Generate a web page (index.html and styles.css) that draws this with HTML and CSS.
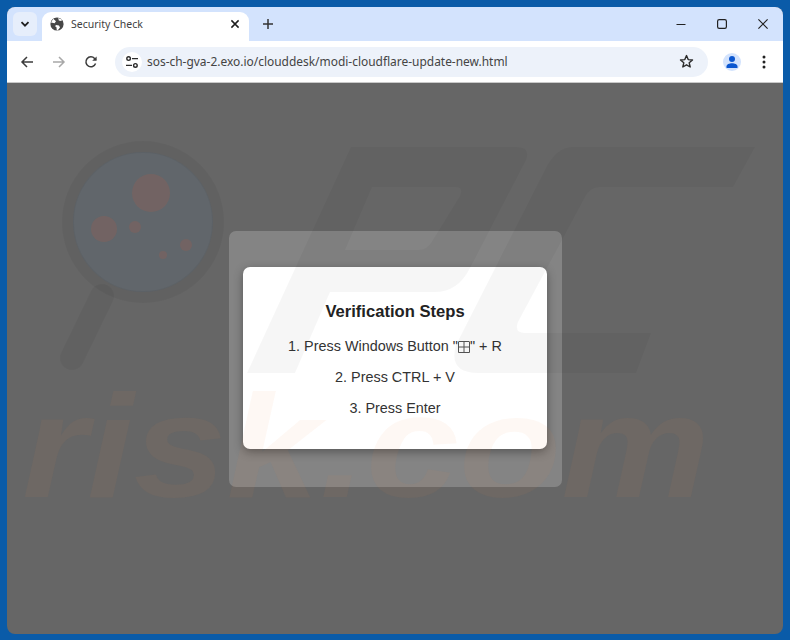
FILE: index.html
```html
<!DOCTYPE html>
<html lang="en">
<head>
<meta charset="utf-8">
<title>Security Check</title>
<link rel="stylesheet" href="styles.css">
</head>
<body>
<div class="window">
  <div class="tabstrip">
    <div class="tabsearch">
      <svg width="12" height="12" viewBox="0 0 12 12"><path d="M2.500 4.200 6 7.700l3.500-3.500" fill="none" stroke="#1f1f1f" stroke-width="1.800"/></svg>
    </div>
    <div class="tab">
      <svg class="globe" width="14" height="14" viewBox="0 0 14 14"><circle cx="7" cy="7" r="6.600" fill="#474747"/><path d="M3.200 1.800 6 4.300 4.600 6.200 1 5.600ZM8.200.9l.6 2.600 2.300.6 1.200-1.300ZM6 8l3 .6 1 1.900-2.200 2.800-1-.1-.4-3.100L5 9.200Z" fill="#fff"/></svg>
      <span class="tabtitle">Security Check</span>
      <svg class="tabclose" width="10" height="10" viewBox="0 0 10 10"><path d="M1.400 1.400l7.200 7.200M8.600 1.400 1.400 8.600" stroke="#1f1f1f" stroke-width="1.500"/></svg>
    </div>
    <svg class="newtab" width="12" height="12" viewBox="0 0 12 12"><path d="M6 1v10M1 6h10" stroke="#333" stroke-width="1.500"/></svg>
    <div class="winctrls">
      <svg width="12" height="12" viewBox="0 0 12 12"><path d="M1.500 6.500h9" stroke="#222" stroke-width="1.200"/></svg>
      <svg width="12" height="12" viewBox="0 0 12 12"><rect x="1.600" y="1.600" width="8.800" height="8.800" rx="1.600" fill="none" stroke="#222" stroke-width="1.200"/></svg>
      <svg width="12" height="12" viewBox="0 0 12 12"><path d="M1.400 1.400l9.200 9.200M10.600 1.400l-9.200 9.200" stroke="#222" stroke-width="1.200"/></svg>
    </div>
  </div>
  <div class="toolbar">
    <div class="navs">
      <svg width="14" height="14" viewBox="0 0 14 14"><path d="M13 7H2M7 2 2 7l5 5" fill="none" stroke="#3c3c3c" stroke-width="1.500"/></svg>
      <svg width="14" height="14" viewBox="0 0 14 14"><path d="M1 7h11M7 2l5 5-5 5" fill="none" stroke="#a8a8a8" stroke-width="1.500"/></svg>
      <svg width="14" height="14" viewBox="0 0 14 14"><path d="M11.600 8.600A5 5 0 1 1 10.600 3.400L12 4.800" fill="none" stroke="#3c3c3c" stroke-width="1.500"/><path d="M12.600 1.400v4.400H8.200Z" fill="#3c3c3c"/></svg>
    </div>
    <div class="omnibox">
      <div class="siteinfo">
        <svg width="14" height="14" viewBox="0 0 14 14"><g fill="none" stroke="#2b2b2b" stroke-width="1.400"><circle cx="3.600" cy="3.600" r="1.800"/><path d="M7 3.600h6"/><circle cx="10.400" cy="10.400" r="1.800"/><path d="M1 10.400h6"/></g></svg>
      </div>
      <span class="url">sos-ch-gva-2.exo.io/clouddesk/modi-cloudflare-update-new.html</span>
      <svg class="star" width="15" height="15" viewBox="0 0 15 15"><path d="M7.500 1.600 9.200 5.600l4.300.4-3.300 2.800 1 4.200-3.700-2.200-3.700 2.200 1-4.200L1.500 6l4.300-.4Z" fill="none" stroke="#2b2b2b" stroke-width="1.400" stroke-linejoin="round"/></svg>
    </div>
    <div class="avatar">
      <svg width="14" height="14" viewBox="0 0 14 14"><circle cx="7" cy="4" r="3" fill="#0b57d0"/><path d="M1.500 13v-1.600C1.500 9.400 4.400 8.300 7 8.300s5.500 1.100 5.500 3.100V13Z" fill="#0b57d0"/></svg>
    </div>
    <svg class="menu" width="4" height="14" viewBox="0 0 4 14"><circle cx="2" cy="2" r="1.500" fill="#222"/><circle cx="2" cy="7" r="1.500" fill="#222"/><circle cx="2" cy="12" r="1.500" fill="#222"/></svg>
  </div>
  <div class="content">
    <div class="modal">
      <div class="card">
        <h2 class="title">Verification Steps</h2>
        <p class="step">1. Press Windows Button "<svg class="winkey" width="12" height="12" viewBox="0 0 12 12"><path d="M1 .5h10a.5.5 0 0 1 .5.5v10.500H.5V1A.5.5 0 0 1 1 .5ZM6 .5v11M.5 6h11" fill="none" stroke="#555" stroke-width="1"/></svg>" + R</p>
        <p class="step">2. Press CTRL + V</p>
        <p class="step">3. Press Enter</p>
      </div>
    </div>
  </div>
</div>
<svg class="watermark" width="790" height="640" viewBox="0 0 790 640">
  <circle class="glass-lens" cx="143" cy="222" r="70"/>
  <circle class="glass-ring" cx="143" cy="222" r="75"/>
  <path class="glass-handle" d="M102 296 72 358"/>
  <circle class="glass-dot" cx="151" cy="193" r="19"/>
  <circle class="glass-dot" cx="104" cy="229" r="13"/>
  <circle class="glass-dot" cx="135" cy="227" r="6"/>
  <circle class="glass-dot" cx="186" cy="245" r="6"/>
  <circle class="glass-dot" cx="163" cy="255" r="4"/>
  <path class="mark-pc" fill-rule="evenodd" d="M351 147H516Q531 147 526 160L470 268Q458 292 435 292H330L295 373H247ZM372 187 345 250H418Q428 250 433 240L460 196Q464 187 455 187Z"/>
  <path class="mark-pc" d="M573 147H755L733 187H600Q590 187 585 197L518 322Q514 333 525 333H651L636 373H478Q448 373 456 345L545 170Q556 147 573 147Z"/>
  <text class="mark-text" x="22" y="497" textLength="688" lengthAdjust="spacingAndGlyphs">risk.com</text>
</svg>
</body>
</html>
```
FILE: styles.css
```css
* { box-sizing: border-box; }
html, body { margin: 0; height: 100%; }
body {
  background: #0a5ba8;
  padding: 7px 7px 6px 7px;
  font-family: "Liberation Sans", Arial, sans-serif;
  position: relative;
  overflow: hidden;
}
.window {
  height: 627px;
  border-radius: 8px;
  overflow: hidden;
  display: flex;
  flex-direction: column;
  background: #666;
}
.tabstrip {
  height: 34px;
  background: #d3e3fd;
  display: flex;
  align-items: flex-end;
  flex: none;
}
.tabsearch {
  width: 24px;
  height: 24px;
  margin: 0 0 5px 6px;
  border-radius: 6px;
  background: #e6eefb;
  display: flex;
  align-items: center;
  justify-content: center;
}
.tab {
  width: 207px;
  height: 29px;
  margin-left: 5px;
  background: #fff;
  border-radius: 9px 9px 0 0;
  display: flex;
  align-items: center;
  padding: 0 9px 5px 8px;
}
.globe { flex: none; }
.tabtitle {
  font-family: "Noto Sans", "Open Sans", sans-serif;
  font-size: 10.500px;
  color: #3f3f3f;
  margin-left: 7px;
  flex: 1;
}
.tabclose { flex: none; }
.newtab { margin: 0 0 11px 13px; }
.winctrls {
  margin-left: auto;
  display: flex;
  gap: 29px;
  padding-right: 14px;
  margin-bottom: 11px;
}
.toolbar {
  height: 42px;
  background: #fff;
  display: flex;
  align-items: center;
  flex: none;
  border-bottom: 1px solid #c9c9c9;
}
.navs {
  display: flex;
  gap: 18px;
  padding-left: 13px;
  width: 108px;
  flex: none;
}
.omnibox {
  width: 593px;
  height: 30px;
  border-radius: 15px;
  background: #edf2fa;
  display: flex;
  align-items: center;
  flex: none;
  padding-left: 7px;
  padding-right: 14px;
}
.siteinfo {
  width: 20px;
  height: 20px;
  border-radius: 50%;
  background: #fff;
  display: flex;
  align-items: center;
  justify-content: center;
  flex: none;
}
.url {
  font-family: "Noto Sans", "Open Sans", sans-serif;
  font-size: 11.950px;
  color: #444;
  margin-left: 5px;
  flex: 1;
  white-space: nowrap;
}
.star { flex: none; }
.avatar {
  width: 18px;
  height: 18px;
  border-radius: 50%;
  background: #d3e3fd;
  margin-left: 15px;
  display: flex;
  align-items: center;
  justify-content: center;
  flex: none;
}
.menu { margin-left: 21px; flex: none; }
.content {
  flex: 1;
  display: flex;
  align-items: center;
  justify-content: center;
}
.modal {
  width: 333px;
  height: 256px;
  margin-top: 1px;
  background: rgba(255, 255, 255, .2);
  border-radius: 7px;
  display: flex;
  align-items: flex-start;
  justify-content: center;
  padding-top: 36px;
}
.card {
  width: 304px;
  height: 182px;
  background: #fff;
  border-radius: 7px;
  box-shadow: 0 3px 10px rgba(0, 0, 0, .35);
  padding: 35px 10px 0;
  text-align: center;
  color: #333;
}
.title {
  margin: 0 0 15px;
  font-size: 16.600px;
  line-height: 20px;
  font-weight: 700;
  color: #222;
}
.step {
  margin: 0 0 13px;
  font-size: 14.400px;
  line-height: 18px;
}
.winkey {
  vertical-align: -2px;
}
.watermark {
  position: absolute;
  left: 0;
  top: 0;
  pointer-events: none;
}
.glass-lens { fill: #4a6a90; fill-opacity: .14; }
.glass-ring { fill: none; stroke: #000; stroke-opacity: .045; stroke-width: 12px; }
.glass-handle { fill: none; stroke: #000; stroke-opacity: .045; stroke-width: 24px; stroke-linecap: round; }
.glass-dot { fill: #c8593a; fill-opacity: .17; }
.mark-pc { fill: #000; fill-opacity: .035; }
.mark-text {
  font-family: "Liberation Sans", Arial, sans-serif;
  font-weight: 700;
  font-style: italic;
  font-size: 146px;
  fill: #e8893c;
  fill-opacity: .06;
}
```
